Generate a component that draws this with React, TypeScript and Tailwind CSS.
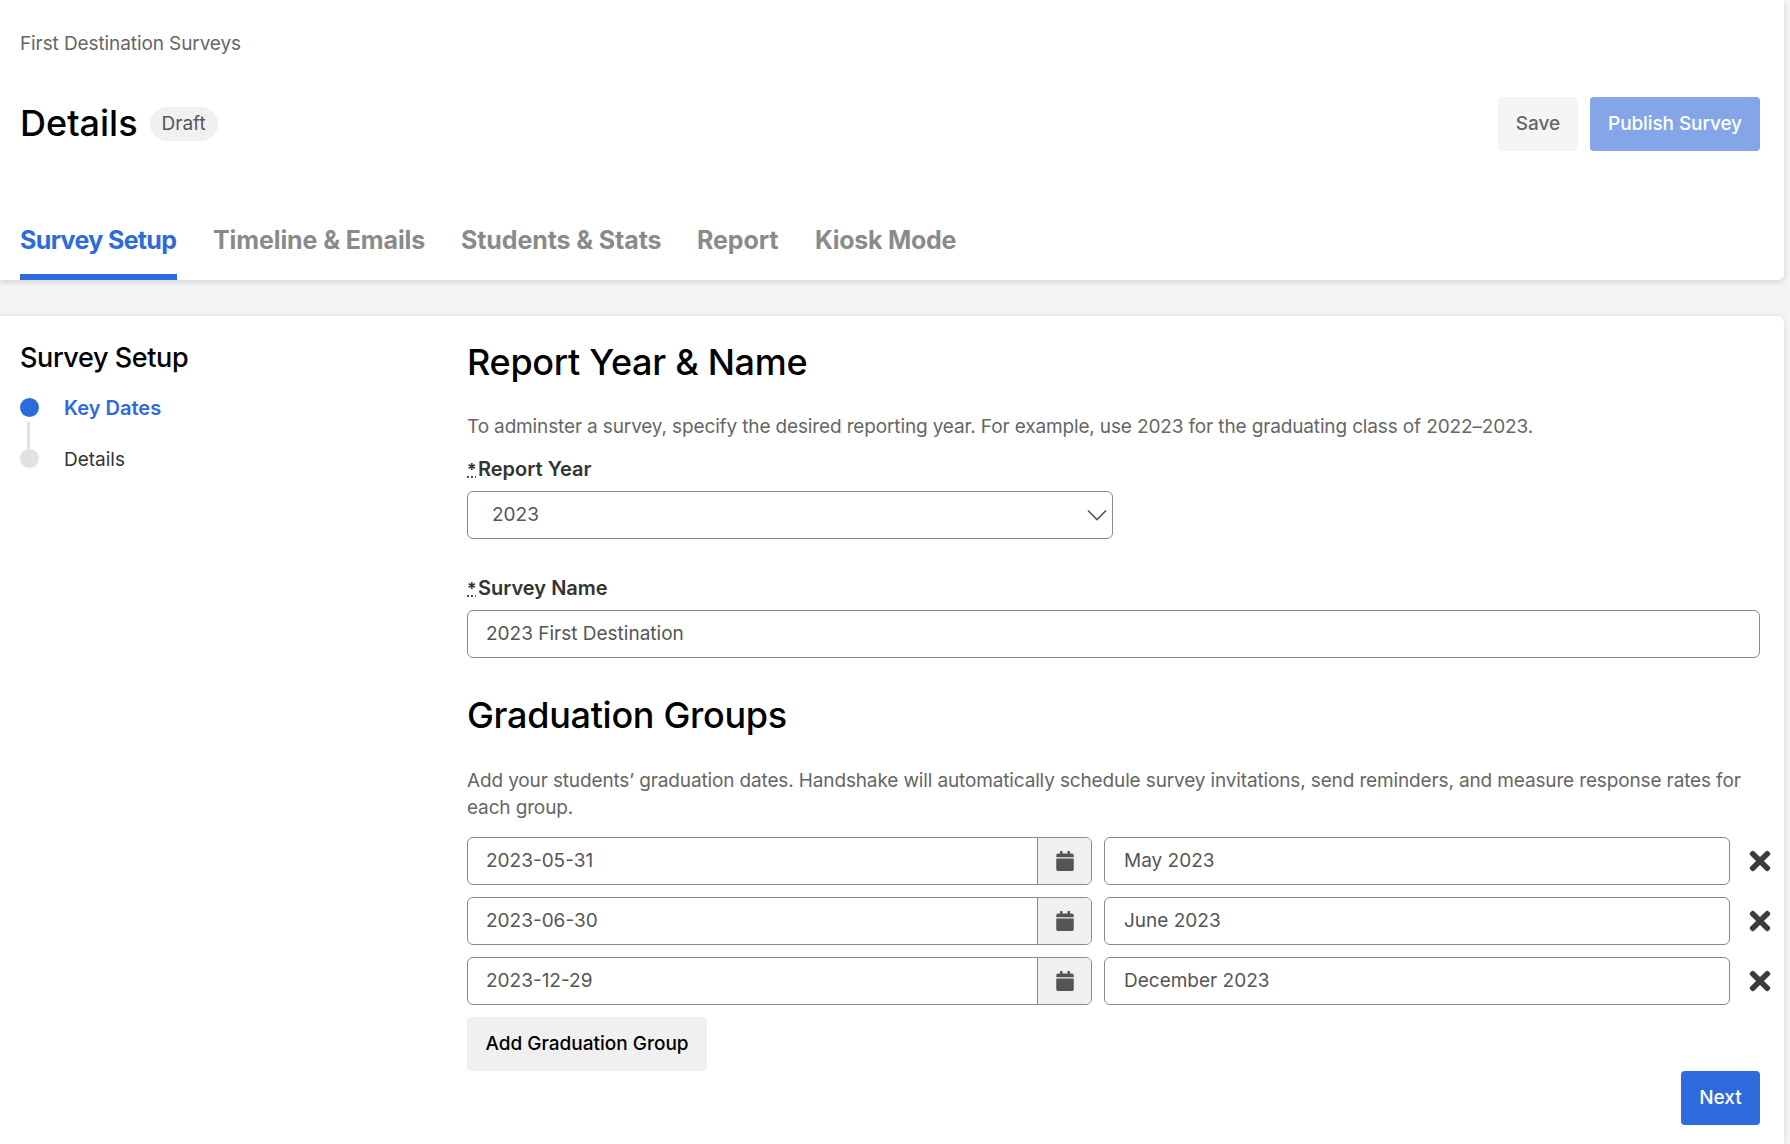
import { FaCalendar, FaTimes } from "react-icons/fa";

const tabs = [
  { label: "Survey Setup", width: "w-[157px] tracking-[-0.65px] border-b-[6px] border-[#2d6bdc] text-[#2d6bdc]" },
  { label: "Timeline & Emails", width: "w-[212px] tracking-[-0.1px] text-[#8a8a8a]" },
  { label: "Students & Stats", width: "w-[200px] tracking-[-0.1px] text-[#8a8a8a]" },
  { label: "Report", width: "w-[82px] tracking-[-0.1px] text-[#8a8a8a]" },
  { label: "Kiosk Mode", width: "w-[141px] tracking-[-0.3px] text-[#8a8a8a]" },
];

const groups = [
  { date: "2023-05-31", name: "May 2023" },
  { date: "2023-06-30", name: "June 2023" },
  { date: "2023-12-29", name: "December 2023" },
];

const RequiredLabel = ({ text }: { text: string }) => (
  <div className="h-[27px] flex items-baseline text-[20px] leading-[27px] font-semibold text-[#333333]">
    <abbr title="required" className="w-[11px] text-[17px] leading-none font-bold underline decoration-dotted">*</abbr>
    {text}
  </div>
);

const App = () => {
  return (
    <div className="min-h-screen bg-[#f5f5f5] pr-[6px] text-[#555555] font-['Inter',sans-serif] overflow-hidden">
      {/* Page header */}
      <header className="h-[280px] bg-white rounded-br-md shadow-[0_2px_6px_rgba(0,0,0,0.15)] px-5 flex flex-col">
        <div className="pt-[30px] text-[19px] leading-[27px] text-[#666666] tracking-[-0.1px]">First Destination Surveys</div>
        <div className="mt-[40px] flex items-start justify-between pr-[4px]">
          <div className="flex items-start gap-3 mt-[3px]">
            <h1 className="text-[36px] leading-[46px] font-medium text-black">Details</h1>
            <span className="mt-[7px] h-[34px] px-3 rounded-full bg-[#f0f0f0] flex items-center text-[19px] text-[#555555]">Draft</span>
          </div>
          <div className="flex gap-3">
            <button className="h-[54px] w-[80px] rounded bg-[#f5f5f5] text-[19px] font-medium text-[#666666]">Save</button>
            <button className="h-[54px] w-[170px] rounded bg-[#84a5e8] text-[19px] tracking-[-0.1px] font-medium text-white">Publish Survey</button>
          </div>
        </div>
        <nav className="mt-auto flex gap-9">
          {tabs.map((tab) => (
            <div key={tab.label} className={"h-[60px] pt-[4px] text-[25px] leading-[32px] font-bold whitespace-nowrap " + tab.width}>
              {tab.label}
            </div>
          ))}
        </nav>
      </header>

      <main className="mt-9 h-[828px] bg-white rounded-tr-md shadow-[0_0_6px_rgba(0,0,0,0.12)] flex">
        {/* Stepper */}
        <aside className="w-[467px] shrink-0 pl-5 pt-[24px]">
          <h2 className="text-[27px] leading-[36px] font-medium text-black tracking-[-0.4px]">Survey Setup</h2>
          <div className="mt-[22px] flex items-center gap-[25px] h-[19px]">
            <span className="size-[19px] rounded-full bg-[#2d6bdc]" />
            <span className="text-[20px] font-semibold text-[#2d6bdc]">Key Dates</span>
          </div>
          <div className="ml-[7px] mt-[5px] h-[27px] w-[3px] bg-[#e2e2e2]" />
          <div className="flex items-center gap-[25px] h-[19px]">
            <span className="size-[19px] rounded-full bg-[#e2e2e2]" />
            <span className="mt-[3px] text-[19px] text-[#333333]">Details</span>
          </div>
        </aside>

        {/* Form */}
        <section className="flex-1 min-w-0 pr-6 pt-[23px]">
          <h2 className="text-[36px] leading-[46px] font-medium text-black tracking-[-0.3px]">Report Year &amp; Name</h2>
          <p className="mt-[28px] text-[19px] leading-[27px] text-[#666666] tracking-[-0.14px]">
            To adminster a survey, specify the desired reporting year. For example, use 2023 for the graduating class of 2022–2023.
          </p>
          <div className="mt-[16px]">
            <RequiredLabel text="Report Year" />
          </div>
          <div className="mt-[8px] w-[646px] h-[48px] rounded-md border border-[#8a8a8a] flex items-center justify-between pl-[24px] pr-[5px] text-[19px] text-[#555555]">
            2023
            <svg viewBox="0 0 20 12" className="w-[20px] h-[12px]" fill="none" stroke="#555555" strokeWidth="1.6">
              <path d="M1 1.5l9 9 9-9" />
            </svg>
          </div>
          <div className="mt-[36px]">
            <RequiredLabel text="Survey Name" />
          </div>
          <div className="mt-[8px] h-[48px] rounded-md border border-[#8a8a8a] flex items-center px-[18px] text-[19px] text-[#555555]">
            2023 First Destination
          </div>

          <h2 className="mt-[34px] text-[36px] leading-[46px] font-medium text-black tracking-[-0.3px]">Graduation Groups</h2>
          <p className="mt-[29px] text-[19px] leading-[27px] text-[#666666] tracking-[-0.14px]">
            Add your students’ graduation dates. Handshake will automatically schedule survey invitations, send reminders, and measure response rates for each group.
          </p>

          <div className="mt-[16px] flex flex-col gap-3">
            {groups.map((g) => (
              <div key={g.date} className="flex items-center">
                <div className="w-[625px] h-[48px] shrink-0 rounded-md border border-[#8a8a8a] flex overflow-hidden">
                  <div className="flex-1 flex items-center px-[18px] text-[19px] text-[#555555]">{g.date}</div>
                  <div className="w-[54px] border-l border-[#8a8a8a] bg-[#f0f0f0] flex items-center justify-center">
                    <FaCalendar className="size-[20px] text-[#555555]" />
                  </div>
                </div>
                <div className="ml-3 w-[626px] h-[48px] shrink-0 rounded-md border border-[#8a8a8a] flex items-center px-[19px] text-[19px] text-[#555555]">
                  {g.name}
                </div>
                <FaTimes className="ml-[15px] size-[30px] shrink-0 text-[#3c3c3c]" />
              </div>
            ))}
          </div>

          <button className="mt-3 block h-[54px] w-[240px] rounded bg-[#f0f0f0] text-[19px] font-medium text-black">
            Add Graduation Group
          </button>
          <div className="flex justify-end">
            <button className="h-[54px] w-[79px] rounded bg-[#2d6bdc] text-[19px] font-medium text-white">Next</button>
          </div>
        </section>
      </main>
    </div>
  );
};

export default App;
